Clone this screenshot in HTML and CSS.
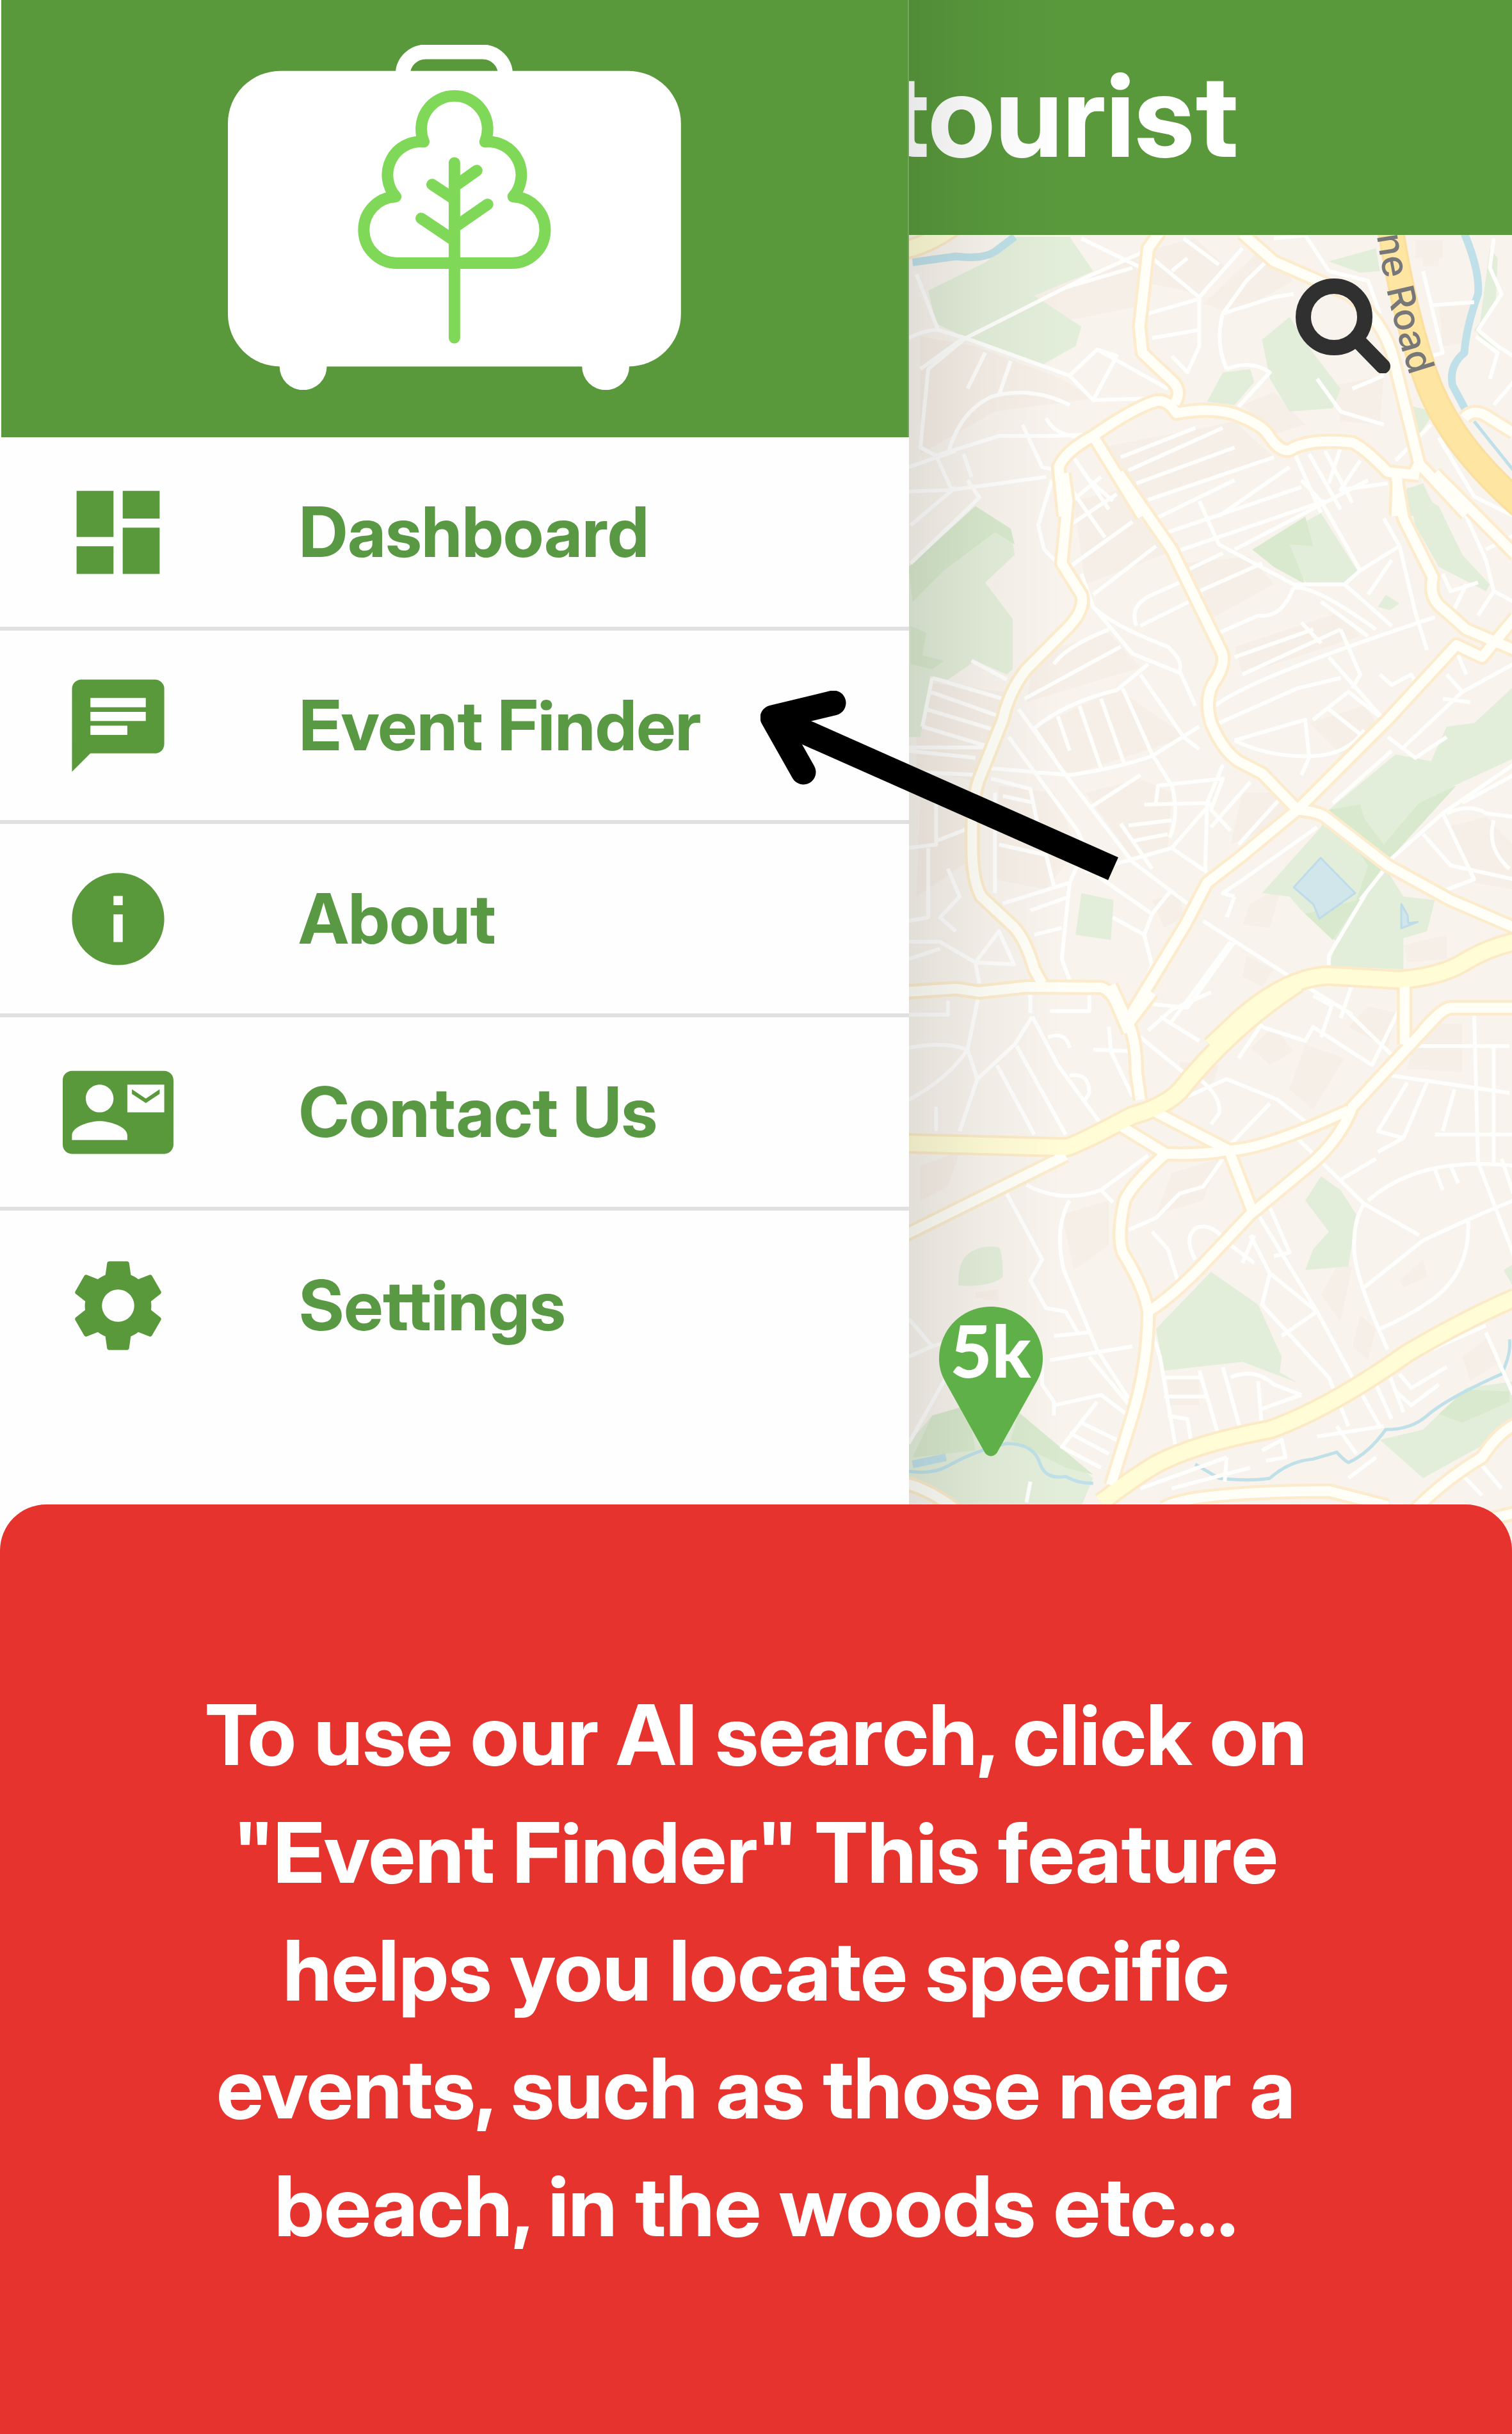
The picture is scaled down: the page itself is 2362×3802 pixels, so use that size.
FILE: index.html
```html
<!DOCTYPE html>
<html lang="en">
<head>
<meta charset="utf-8">
<meta name="viewport" content="width=device-width, initial-scale=1">
<title>Event Finder guide</title>
<link rel="stylesheet" href="styles.css">
</head>
<body>
<div class="page">
  <div class="stage">
    <nav class="drawer" aria-label="Main menu">
      <div class="drawer-head">
        <svg class="logo" viewBox="356 69 710 541" role="img" aria-label="Suitcase with a tree">
          <rect x="356" y="110" width="710" height="463" rx="82" fill="#fff"/>
          <circle cx="474" cy="573" r="37" fill="#fff"/>
          <circle cx="948" cy="573" r="37" fill="#fff"/>
          <path d="M630 116C630 96 646 80 666 80H755C775 80 791 96 791 116" fill="none" stroke="#fff" stroke-width="23"/>
          <g fill="none" stroke="#80d858" stroke-width="18" stroke-linecap="round" stroke-linejoin="round">
            <path d="M663 221A52 52 0 1 1 759 221A52 52 0 0 1 803 307A52 52 0 0 1 799 411H623A52 52 0 0 1 619 307A52 52 0 0 1 663 221Z"/>
            <path d="M711 254V528M746 266L711 291M676 288L711 311M763 319L711 355M659 341L711 376"/>
          </g>
        </svg>
      </div>
      <ul class="menu">
        <li><a href="#dashboard"><svg class="icon" viewBox="0 0 24 24" aria-hidden="true"><path d="M3 13h8V3H3v10zm0 8h8v-6H3v6zm10 0h8V11h-8v10zm0-18v6h8V3h-8z"/></svg><span>Dashboard</span></a></li>
        <li><a href="#events"><svg class="icon" viewBox="0 0 24 24" aria-hidden="true"><path d="M20 2H4c-1.1 0-1.99.9-1.99 2L2 22l4-4h14c1.1 0 2-.9 2-2V4c0-1.1-.9-2-2-2zM6 9h12v2H6V9zm8 5H6v-2h8v2zm4-6H6V6h12v2z"/></svg><span>Event Finder</span></a></li>
        <li><a href="#about"><svg class="icon" viewBox="0 0 24 24" aria-hidden="true"><path d="M12 2C6.48 2 2 6.48 2 12s4.480 10 10 10 10-4.480 10-10S17.520 2 12 2zm1 15h-2v-6h2v6zm0-8h-2V7h2v2z"/></svg><span>About</span></a></li>
        <li><a href="#contact"><svg class="icon" viewBox="0 0 24 24" aria-hidden="true"><path d="M21 8V7l-3 2-3-2v1l3 2 3-2zm1-5H2C.9 3 0 3.900 0 5v14c0 1.100.9 2 2 2h20c1.100 0 1.990-.9 1.990-2L24 5c0-1.100-.9-2-2-2zM8 6c1.660 0 3 1.340 3 3s-1.340 3-3 3-3-1.340-3-3 1.340-3 3-3zm6 12H2v-1c0-2 4-3.100 6-3.100s6 1.100 6 3.100v1zm8-6h-8V6h8v6z"/></svg><span>Contact Us</span></a></li>
        <li><a href="#settings"><svg class="icon" viewBox="0 0 24 24" aria-hidden="true"><path d="M19.140 12.940c.04-.3.06-.61.06-.94 0-.32-.02-.64-.07-.94l2.030-1.580c.18-.14.23-.41.12-.61l-1.920-3.320c-.12-.22-.37-.29-.59-.22l-2.390.96c-.5-.38-1.030-.7-1.620-.94l-.36-2.540c-.04-.24-.24-.41-.48-.41h-3.840c-.24 0-.43.17-.47.41l-.36 2.540c-.59.24-1.130.57-1.620.94l-2.390-.96c-.22-.08-.47 0-.59.22L2.740 8.870c-.12.21-.08.47.12.61l2.030 1.580c-.05.3-.09.63-.09.94s.02.64.07.94l-2.030 1.580c-.18.14-.23.41-.12.61l1.920 3.320c.12.22.37.29.59.22l2.390-.96c.5.38 1.030.7 1.620.94l.36 2.540c.05.24.24.41.48.41h3.840c.24 0 .44-.17.47-.41l.36-2.540c.59-.24 1.130-.56 1.620-.94l2.390.96c.22.08.47 0 .59-.22l1.920-3.320c.12-.22.07-.47-.12-.61l-2.010-1.580zM12 15.500c-1.930 0-3.500-1.570-3.500-3.500s1.570-3.500 3.500-3.500 3.500 1.570 3.500 3.500-1.570 3.500-3.500 3.500z"/></svg><span>Settings</span></a></li>
      </ul>
    </nav>

    <main class="app">
      <header class="app-bar"><h1 class="app-title">tourist</h1></header>
      <div class="map">
        <svg class="map-art" viewBox="1419 367 943 2055" preserveAspectRatio="xMinYMin slice" role="img" aria-label="Street map">
          <defs>
            <g id="major">
              <g transform="translate(1400 0) scale(.6135 .5102)">
                <path d="M670 710L640 760L618 1000L625 1080L700 1165Q728 1195 708 1235"/>
                <path d="M425 1580L412 1430Q430 1380 500 1335Q600 1250 660 1228Q690 1222 712 1265Q800 1245 860 1268Q930 1300 945 1330Q975 1385 1000 1378Q1050 1340 1160 1355Q1190 1370 1250 1445L1330 1455"/>
                <path d="M500 1335L625 1580M1275 1450L1272 1580M1330 1420L1450 1575"/>
                <path d="M880 715L960 800L1150 900Q1240 980 1265 1100L1330 1420L1310 1460"/>
                <path d="M1445 1280Q1470 1245 1510 1280L1570 1325"/>
              </g>
              <g transform="translate(1400 750) scale(.6135 .5421)">
                <path d="M425 -20L435 60L420 240L470 330Q480 370 440 420L330 545Q285 610 270 690L210 860Q190 920 192 1040Q190 1150 215 1200L300 1290Q330 1330 350 1410L370 1450"/>
                <path d="M565 -20L700 200L825 490Q840 520 815 570Q780 620 800 700Q830 780 870 810L930 845L1020 950Q1070 955 1090 970L1250 1110L1410 1210L1575 1290"/>
                <path d="M1270 -20L1290 110L1365 280Q1355 330 1380 360L1450 430L1575 490"/>
                <path d="M1370 -20L1575 215M1575 395L1490 510L1425 475L1250 690L1020 950L870 1090L790 1160L735 1280L580 1570"/>
                <path d="M20 1475L150 1465L210 1475L330 1460L520 1462Q545 1470 560 1510L590 1590M1293 1450V1590M1570 1520H1410Q1390 1520 1340 1585"/>
              </g>
              <g transform="translate(1400 1550) scale(.6135 .5421)">
                <path d="M545 -20L590 90Q610 140 610 230L620 310M650 0L590 90M1293 -20V150M1575 45H1410Q1390 50 1370 75L1160 330Q1130 420 1060 490L900 640L800 760Q710 870 640 920Q640 1070 600 1220L545 1420"/>
                <path d="M650 340L845 455Q930 455 1150 340M570 385L685 465Q770 470 845 455L905 630M685 465Q600 550 580 600Q560 700 575 750Q630 850 640 920M20 700L430 470"/>
                <path d="M20 1415Q80 1430 150 1490M680 1485Q740 1440 1100 1437L1250 1480M1320 1490Q1400 1400 1490 1340Q1530 1270 1575 1245M1480 1525L1575 1500"/>
              </g>
            </g>
            <g id="yellow">
              <g transform="translate(1400 0) scale(.6135 .5102)"><path d="M20 765Q80 750 150 690"/></g>
              <g transform="translate(1400 750) scale(.6135 .5421)"><path d="M800 1630L880 1545Q1000 1430 1100 1428L1280 1440Q1390 1430 1450 1385Q1510 1345 1575 1330"/></g>
              <g transform="translate(1400 1550) scale(.6135 .5421)"><path d="M20 435L430 447Q450 445 600 355Q680 330 720 285Q850 100 1020 -25M520 1470Q600 1400 660 1360Q760 1300 950 1260Q1100 1200 1300 1040Q1450 940 1575 880"/></g>
            </g>
          </defs>

          <rect class="land" x="1417" y="367" width="945" height="2055"/>

          <g class="blocks">
            <g transform="translate(1400 0) scale(.6135 .5102)">
              <path d="M340 900L480 840L640 760L610 940L400 990ZM660 760L760 730L840 820L770 900L650 870ZM780 930L930 760L1010 860L860 960ZM60 1030L200 1060L420 1160L500 1220L250 1260L60 1390ZM520 1370L860 1290L960 1400L600 1540ZM880 1240L960 1200L1040 1300L960 1330ZM1110 1180L1240 1150L1230 1300L1130 1290ZM1380 930H1480L1450 1050L1390 1060ZM1320 735H1390V790H1320ZM1340 790H1380V815H1340Z"/>
            </g>
            <g transform="translate(1400 750) scale(.6135 .5421)">
              <path d="M450 60L560 30L690 210L480 300ZM720 240L900 220L960 300L800 400ZM860 480L1130 380L1180 450L880 560ZM350 500L540 440L620 540L330 640ZM340 720L560 600L740 740L440 850ZM50 580L280 610L210 870L50 830ZM60 900L180 930L180 1100L50 1200ZM260 880L400 900L460 1060L380 1180L250 1150ZM480 900L620 860L700 900L690 1060L600 1090ZM880 900L980 900L1000 980L850 1050ZM1050 700L1190 650L1240 730L1130 790ZM1290 1340L1400 1310V1380L1300 1390ZM890 1370L960 1410L930 1460L880 1430ZM650 1210L720 1190L730 1260L680 1290ZM900 1220L980 1170L950 1290L880 1280ZM1400 1000L1500 970L1570 1050V1180L1470 1160Z"/>
            </g>
            <g transform="translate(1400 1550) scale(.6135 .5421)">
              <path d="M200 865L260 855V890L200 880ZM900 160L960 100L1010 170L950 210ZM1040 150L1140 190L1060 340L1000 280ZM1200 40L1270 60L1250 160L1150 100ZM1330 90H1440V230L1300 220ZM700 520L820 480L780 600L660 640ZM420 640L540 600L540 730L450 800ZM1120 790H1160L1130 950L1080 870ZM1440 1050L1510 990L1530 1070L1460 1120ZM1280 830L1340 770L1350 820L1290 850ZM690 1110H770V1190H690ZM720 200L820 210L800 280L720 300ZM60 500L160 460L130 560L60 600ZM1180 930L1220 970L1200 1060L1160 1020Z"/>
            </g>
          </g>

          <g class="park">
            <g transform="translate(1400 0) scale(.6135 .5102)">
              <path d="M230 800L300 725H440L500 830L350 905L470 1000L455 1060L370 1117L185 1040L100 990L80 890Z"/>
              <path d="M930 1040L1000 970L1060 1080L1130 1190L1110 1250L1000 1260L950 1160ZM830 1140L900 1130L910 1170L860 1240L790 1230ZM1100 800L1220 760L1230 830L1180 835ZM1300 1240L1370 1260L1330 1330ZM1290 1500L1340 1480L1380 1580H1290ZM1510 760L1530 790L1525 930L1470 1010L1530 1070L1480 1030Z"/>
            </g>
            <g transform="translate(1400 750) scale(.6135 .5421)">
              <path d="M200 75L290 140L300 215L225 295L295 400V545L280 560L200 520L130 575L85 565L60 740H30V250Z"/>
              <path d="M905 200L1080 95L1175 265L1140 300L1045 302Q1030 260 905 200ZM1300 20L1380 75L1440 215L1510 300L1500 320L1380 250L1320 130ZM1225 365L1245 330L1280 355L1255 375ZM1100 950L1270 790L1360 810L1400 710L1470 700L1575 590V800L1420 880L1240 1110L1290 1200L1370 1210L1350 1300L1290 1320V1410L1100 1400L1120 1330L1030 1240L1000 1200L930 1190L1080 1000ZM470 1190L552 1210L545 1325L455 1310Z"/>
            </g>
            <g transform="translate(1400 1550) scale(.6135 .5421)">
              <path d="M157 845Q155 780 180 755Q215 725 260 735Q270 750 270 820Q240 850 157 845ZM660 970L800 805L920 900L980 1050L975 1095L1020 1125L880 1065L680 1090ZM1080 530L1130 570L1170 640L1150 790L1040 800L1060 740L1100 690L1040 600ZM30 1300L90 1220L180 1190L310 1210L500 1400L470 1480H150L30 1400ZM1230 1290L1340 1260L1450 1140L1575 1120V1230L1500 1300L1340 1400ZM1545 800L1575 780V860Z"/>
            </g>
          </g>
          <g class="park-deep">
            <g transform="translate(1400 750) scale(.6135 .5421)">
              <path d="M200 75L290 140L300 185L250 150L120 260L40 350L30 250ZM35 420L75 440L65 505L120 520L90 545L35 530ZM905 200L1040 105L1060 190L1000 185L1020 240L1040 300L960 250ZM1100 950L1180 935L1190 975L1240 1050L1330 930L1425 880L1240 1110L1110 1325L1040 1250L1170 1210L1200 1110Z"/>
            </g>
            <g transform="translate(1400 1550) scale(.6135 .5421)">
              <path d="M310 1210L500 1390L430 1370L290 1290ZM90 1220L180 1190L200 1320L40 1340ZM1380 1215L1450 1145L1560 1150V1180L1440 1240Z"/>
            </g>
          </g>
          <g class="lake">
            <path d="M2062 1340L2116 1395L2060 1435L2051 1413L2020 1386Z"/>
            <path d="M2188 1412L2198 1430L2199 1442L2214 1440L2188 1450Z"/>
          </g>

          <g class="water">
            <g transform="translate(1400 0) scale(.6135 .5102)">
              <path d="M1470 1290L1570 1440"/>
              <path class="wide" d="M40 803L150 785Q220 795 250 770L300 725M1445 715Q1485 830 1480 900Q1450 1000 1445 1080Q1405 1120 1415 1180L1455 1270"/>
            </g>
            <g transform="translate(1400 1550) scale(.6135 .5421)">
              <path d="M30 1380Q90 1390 130 1365Q200 1320 280 1300Q350 1300 365 1360Q380 1405 430 1395Q460 1415 500 1415M760 1360L820 1400Q900 1410 950 1400Q1000 1350 1060 1345L1120 1325Q1140 1350 1150 1355Q1200 1330 1245 1260Q1310 1260 1350 1220Q1400 1170 1540 1100Q1565 1040 1560 1000"/>
              <path class="wide" d="M40 1360L125 1340"/>
            </g>
          </g>

          <g class="minor">
            <g transform="translate(1400 0) scale(.6135 .5102)">
              <path d="M50 840L105 1010L175 1035L440 1150L500 1225L640 1220M175 1035L480 850L630 770M30 1035Q70 1010 105 1010M175 1035L80 1130L60 1370L100 1395L260 1335H400L490 1330M130 1390Q160 1260 240 1215Q340 1180 440 1240M60 1130L170 1035M225 1080L180 1190M290 1105L260 1210M500 1225L560 1090L510 1070L440 1150M510 1070L690 1190M650 790L770 910L880 760M700 830L740 790M470 730L640 830M430 880L600 820M640 960L770 915V1060L740 1140L700 1090M650 1035L770 1010M830 960L890 860L950 790M830 960Q810 1050 840 1130M830 960L960 910L1010 900M730 730L820 810M960 730L1040 720L1100 830M380 1280Q400 1330 460 1338M320 1300L370 1430L410 1440M30 1430L150 1380M170 1390L190 1460M100 1395L140 1500L30 1505M140 1500L380 1460M840 1130Q900 1100 950 1140L870 1245M1070 1160L1130 1260L1240 1300M1160 1190L1240 1150M1100 830L1200 860L1230 960M1340 830L1390 1080L1300 1110M1360 935L1470 925M1520 730L1510 820L1540 900L1480 1010L1530 1060L1570 1090M1475 1030L1530 1080L1510 1160M1570 1170L1520 1240"/>
              <path d="M570 1400L760 1310M590 1440L830 1310M610 1480L860 1370M640 1530L960 1400M820 1580L1000 1430M1010 1380L1080 1570M1050 1390L1130 1560M1090 1380L1160 1540M450 1400L540 1560M520 1460L450 1530M1130 1370L1100 1480M1180 1410L1130 1500L1250 1480M1360 1300L1270 1410M1380 1340L1470 1520L1570 1580"/>
            </g>
            <g transform="translate(1400 750) scale(.6135 .5421)">
              <path d="M35 130L150 20M35 240L210 50L180 0M395 0L360 130L375 200L420 250M440 130L560 40M440 250L600 120M440 20L530 165M490 0L550 60M690 150L1030 20M700 210L1090 60M660 110L860 0M770 60L820 185L1010 300L1140 300L1180 260L1080 60L1030 0M860 200L1200 0M500 330L660 190M500 365Q550 420 690 480Q730 520 720 550L760 650M470 270L500 365L600 500L720 555M610 420Q590 360 650 330L750 280M620 420L780 330M720 270L830 210M750 330L930 240M820 440L920 390Q980 400 1010 310M860 510L1060 430M880 560L1130 430M810 650Q900 570 1370 395M820 700L1020 600L1130 570M1010 310Q1060 300 1220 430M1140 300L1260 420M1180 260L1280 190L1240 110M1280 190L1320 380L1350 490M1030 410L1080 470M1080 350L1200 450M1200 330L1260 230M1100 510L1240 690M1130 430L1180 560L1160 600"/>
              <path d="M400 530Q430 480 540 430M325 630L570 480M350 715Q430 640 560 605L640 530M240 830L440 850Q560 830 650 795L770 710M310 660L430 850L600 1100M285 740L460 1010L480 1060M350 715L400 800M410 680L440 780M465 650L520 830M520 630L580 820M575 600L650 790L700 880Q720 960 695 1030M620 560L730 740L770 775M270 910L350 930M190 520L280 575M90 570L270 630M85 610L260 680M75 660L250 720M65 710L240 770L30 770M30 780L200 800M30 840L210 850M90 570L65 710M490 945L620 850M630 935L800 930M660 930L665 880L830 860L800 950L850 1010M830 820L790 930L785 1130M800 1000L900 870M870 1050L990 900M860 750L1040 690L1050 800L1030 850M860 750Q950 800 1060 795Q1150 790 1190 720M1100 660L1200 750M1060 690L1150 610L1240 690M1250 740L1320 800L1400 740M1290 770L1440 610L1400 560M1440 610L1570 530M1110 930L1260 780M570 990L650 1120M590 995L700 980M600 1040L690 1020M480 1130L700 1060L790 1130M700 1060L800 930M600 1100L740 1220M510 1140L650 1250L630 1310L550 1260M650 1250L700 1180M780 1270L1000 1430M850 1330L700 1560M860 1200L830 1190L870 1160L1070 1000M860 1200L840 1260M630 1310L650 1400L580 1560M650 1510L740 1520L860 1330M270 1220L440 1160L480 1060M440 1160L420 1380L440 1440M260 1050L380 1080L400 1170M250 900L250 1190M240 860L340 890L360 1000M100 930V1050L30 1060M100 1040L190 1000M80 1060V1260L30 1270M130 1120L160 1200L110 1260L150 1300M30 1330H110L200 1390L300 1395M200 1390L260 1300L300 1400M200 1390L210 1450M30 1380L110 1350M1000 1430L1160 1540M1160 1450L1130 1550M1200 1180L1100 1370V1400M1250 1110L1180 1210M1250 1100L1390 960L1570 820M1390 960L1470 1150L1400 1180M1340 1020L1410 1110L1570 1150M1400 960Q1460 930 1500 960L1570 970M1520 980Q1500 1060 1560 1120M1570 850L1440 930M1390 270L1410 320L1480 295M1450 300L1420 370M1440 80L1500 230L1520 320L1480 390M1500 200L1570 160M1520 320L1570 350M1230 560L1260 590L1310 560L1330 600M1390 630L1460 640M1450 560L1420 480M350 1310L420 1290M340 1240L440 1200M30 1540H130V1500M390 1530H490V1480"/>
            </g>
            <g transform="translate(1400 1550) scale(.6135 .5421)">
              <path d="M30 160Q120 140 180 165L210 0M180 165Q130 250 30 310M180 165L205 250L160 400M345 70L300 150L205 250M345 70L410 210L520 380M340 60V0M305 155L430 410M255 210L350 410M385 130Q430 110 440 160M440 240Q490 230 490 290L480 310M100 330V400M500 165L600 170M540 100L545 170L600 300M610 120L740 240M640 110L700 50L800 0M670 70L770 140M760 240Q830 300 820 350L800 380M740 300L840 250L970 310L1060 390M930 100L1040 140L1060 100L1210 210L1300 0M930 90L870 190M1110 30L1080 130M1150 60L1260 180M1060 10L1110 40M1320 155H1560M1470 60L1480 490L1575 770M1520 160V490M1540 480L1570 580M1260 240L1560 290M1300 260L1225 400L1290 420L1350 260M1420 280L1390 400M1370 410H1570M1225 460L1290 420M840 450L950 320M1010 410L1190 610L1330 700M1130 540L1220 480M1190 610Q1160 660 1165 750Q1170 830 1250 1030M1200 600Q1330 470 1570 500M1190 850L1340 715Q1480 640 1570 600M1455 660Q1460 800 1370 880Q1310 930 1230 970M1370 510L1390 570M1410 500L1430 550"/>
              <path d="M330 555Q420 610 520 570L640 470M520 570L550 605M280 580L370 770L340 830L380 910L430 920L460 980M440 600Q400 680 425 800L510 1030L590 1170M30 940L90 1020L30 1050M90 1020L150 1000M390 1060L600 1020M400 990L490 980M400 1220L400 1180L370 1130V1060M400 1190L520 1160L590 1220M510 1180L420 1310L520 1370M440 1270L540 1330M470 1240L560 1290M490 1050L600 1200M830 480L780 560L720 580L660 650L590 685M650 690L690 740L715 830M910 700L880 780M760 770Q730 710 760 680Q800 660 840 720L910 780M900 700L950 810L930 900L1100 1110L1150 1250M950 810L1070 920L980 990M920 640L1070 920L1170 1130L1230 1250M950 620L1000 750L960 760M650 980L670 1050L710 1310M680 1110H780M680 1165H790M770 1090L820 1280M830 1080L880 1280M850 1110Q910 1080 960 1130L1030 1160M920 1120L930 1260M930 1200L1030 1160M690 1220L740 1230L750 1300M1200 1080L1260 1230M1240 1060L1290 1210M1280 1100L1310 1140L1400 1080M1270 1150L1310 1190L1380 1130M1500 980L1570 1160M1300 1060L1500 960M1070 1280L1240 1250M1120 1250L1170 1330M840 1340L835 1410M620 1430L840 1340M930 1320L980 1290L990 1340L940 1350M700 1430L900 1370M1440 1390L1490 1450M1480 1350L1540 1430M30 1300L130 1100M1150 1400L1220 1340M340 1410L330 1470"/>
            </g>
          </g>

          <use class="casing" href="#major"/>
          <use class="casing-wide" href="#yellow"/>
          <use class="road" href="#major"/>
          <use class="road-yellow" href="#yellow"/>
          <path class="trunk-edge" d="M2170 350Q2190 480 2225 585Q2260 690 2375 790"/>
          <path class="trunk" d="M2170 350Q2190 480 2225 585Q2260 690 2375 790"/>
          <path id="road-name" d="M2150 368Q2166 480 2206 600" fill="none"/>
          <text class="street"><textPath href="#road-name">ne Road</textPath></text>
        </svg>
        <button class="search" type="button" aria-label="Search">
          <svg viewBox="0 0 148 148" aria-hidden="true"><circle cx="60" cy="60" r="48"/><path d="M100 100L136 137"/></svg>
        </button>
        <div class="pin">
          <svg class="pin-shape" viewBox="0 0 162 234" aria-hidden="true"><path d="M81 0C126 0 162 36 162 81C162 94 159 105 153 116L90 229Q81 238 72 229L9 116C3 105 0 94 0 81C0 36 36 0 81 0Z" fill="#5fb048"/></svg>
          <span class="pin-label">5k</span>
        </div>
      </div>
    </main>

    <svg class="arrow" viewBox="1188 1079 562 300" aria-hidden="true">
      <path d="M1739 1357L1207 1121"/>
      <path d="M1302 1098L1207 1121L1255 1206" stroke-linecap="round" stroke-linejoin="round"/>
    </svg>
  </div>

  <section class="tip">
    <p>To use our AI search, click on "Event Finder" This feature helps you locate specific events, such as those near a beach, in the woods etc...</p>
  </section>
</div>
</body>
</html>
```
FILE: styles.css
```css
* { box-sizing: border-box; }

body {
  margin: 0;
  font-family: "Inter Display", "Inter Tight", Inter, sans-serif;
  background: #fff;
}

.page {
  display: grid;
  grid-template-rows: 1fr auto;
  min-height: 100vh;
}

.stage {
  position: relative;
  display: grid;
  grid-template-columns: 601fr 399fr;
}

/* Drawer */
.drawer {
  position: relative;
  z-index: 2;
  background: #fefefe;
}

.drawer-head {
  display: flex;
  justify-content: center;
  padding: 70px 0 74px;
  margin-left: 2px;
  background: #59993c;
  border-right: 2px solid #70a758;
}

.logo {
  display: block;
  width: 50%;
}

.menu {
  margin: 0;
  padding: 0;
  list-style: none;
}

.menu li + li { border-top: 6px solid #e0e0e0; }

.menu a {
  display: flex;
  align-items: center;
  gap: 196px;
  height: 296px;
  padding-left: 98px;
  color: #5a9944;
  font-size: 108px;
  font-weight: 700;
  line-height: 128px;
  text-decoration: none;
}

.icon {
  width: 173px;
  height: 173px;
  fill: #59993c;
}

/* App behind the drawer */
.app {
  position: relative;
  display: flex;
  flex-direction: column;
  min-width: 0;
}

.app::after {
  content: "";
  position: absolute;
  inset: 0 auto 0 0;
  width: 240px;
  background: linear-gradient(90deg, rgba(0, 0, 0, .09), rgba(0, 0, 0, .03) 50%, transparent);
  pointer-events: none;
}

.app-bar {
  display: flex;
  justify-content: flex-end;
  align-items: center;
  height: 367px;
  padding: 0 428px 8px 0;
  background: #59993c;
}

.app-title {
  margin: 0;
  color: #fff;
  font-size: 180px;
  font-weight: 700;
  line-height: 200px;
}

.map {
  position: relative;
  flex: 1;
  overflow: hidden;
  background: #f7f2eb;
}

.map-art {
  position: absolute;
  inset: 0;
  width: 100%;
  height: 100%;
}

.map-art path { vector-effect: non-scaling-stroke; stroke-linejoin: round; }
.land { fill: #f8f4ed; }
.blocks { fill: #f6efe7; }
.park { fill: #e3eeda; }
.park-deep { fill: #d8e9cd; }
.lake { fill: #d0e6eb; stroke: #bddbe8; stroke-width: 3px; }
.water { fill: none; stroke: #bfe0e8; stroke-width: 5px; }
.water .wide { stroke-width: 12px; }
.minor { fill: none; stroke: #fefefc; stroke-width: 6px; }
.casing { fill: none; stroke: #fceccd; stroke-width: 24px; }
.road { fill: none; stroke: #fffff8; stroke-width: 15px; }
.casing-wide { fill: none; stroke: #fceac6; stroke-width: 32px; }
.road-yellow { fill: none; stroke: #fffcd6; stroke-width: 24px; }
.trunk-edge { fill: none; stroke: #fadf9e; stroke-width: 42px; }
.trunk { fill: none; stroke: #fee6a2; stroke-width: 35px; }

.street {
  fill: #77777a;
  font-family: Inter, sans-serif;
  font-size: 58px;
  font-weight: 500;
}

.search {
  position: absolute;
  top: 68px;
  right: 190px;
  width: 148px;
  height: 148px;
  padding: 0;
  border: 0;
  background: none;
}

.search svg {
  display: block;
  fill: none;
  stroke: #303030;
  stroke-width: 24;
  stroke-linecap: round;
}

.pin {
  position: absolute;
  top: 1674px;
  left: 47px;
  z-index: 1;
  width: 162px;
}

.pin-shape { display: block; width: 100%; }

.pin-label {
  position: absolute;
  inset: 12px 0 auto;
  color: #fff;
  font-family: Lato, sans-serif;
  font-size: 112px;
  font-weight: 900;
  line-height: 112px;
  text-align: center;
}

/* Pointer drawn over the drawer and the map */
.arrow {
  position: absolute;
  top: 1079px;
  left: 1188px;
  z-index: 3;
  width: 562px;
  fill: none;
  stroke: #000;
  stroke-width: 39;
}

/* Instruction panel */
.tip {
  position: relative;
  z-index: 4;
  margin-top: -72px;
  padding: 268px 280px 264px;
  border-radius: 72px 72px 0 0;
  background: #e7332e;
  color: #fff;
  font-size: 130px;
  font-weight: 700;
  line-height: 184px;
  text-align: center;
}

.tip p { margin: 0; }
```
